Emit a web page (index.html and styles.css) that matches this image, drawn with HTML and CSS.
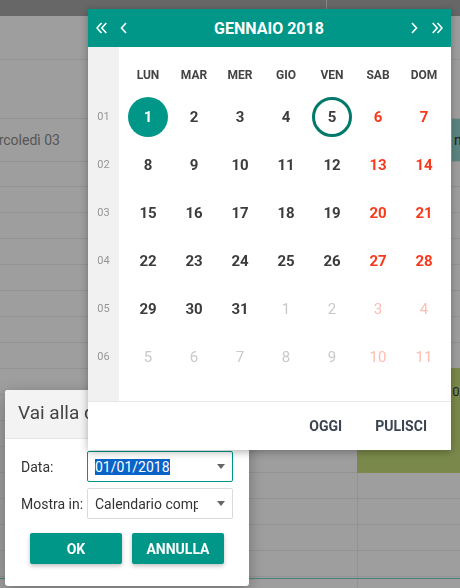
FILE: index.html
```html
<!DOCTYPE html>
<html lang="it">
<head>
    <meta charset="UTF-8">
    <meta name="viewport" content="width=device-width, initial-scale=1.0">
    <title>Vai alla data</title>
    <link rel="stylesheet" href="styles.css">
</head>
<body>

<div class="app">
    <div class="topbar"><div class="topbar-left"></div></div>
    <div class="row row-tall"></div>
    <div class="row row-taller"></div>
    <div class="row day-row">
        <span class="day-label">Mercoledì 03</span>
        <span class="allday">nel</span>
    </div>
    <div class="row row-short"></div>
    <div class="slots">
        <div class="slot"></div><div class="slot"></div><div class="slot"></div><div class="slot"></div>
        <div class="slot"></div><div class="slot"></div><div class="slot"></div><div class="slot"></div>
        <div class="slot"></div><div class="slot"></div><div class="slot"></div><div class="slot"></div>
        <div class="slot"></div><div class="slot"></div><div class="slot"></div><div class="slot"></div>
        <div class="event">10:00 - 12:00</div>
        <div class="now-line"></div>
    </div>
</div>

<div class="backdrop"></div>

<div class="dialog">
    <div class="dialog-title">Vai alla data</div>
    <div class="dialog-body">
        <div class="field">
            <label>Data:</label>
            <div class="select focused">
                <span class="sel-text"><span class="highlight">01/01/2018</span></span>
                <i class="caret"></i>
            </div>
        </div>
        <div class="field">
            <label>Mostra in:</label>
            <div class="select">
                <span class="sel-text">Calendario completo</span>
                <i class="caret"></i>
            </div>
        </div>
        <div class="dialog-actions">
            <button class="btn">OK</button>
            <button class="btn">ANNULLA</button>
        </div>
    </div>
</div>

<div class="datepicker">
    <div class="dp-header">
        <button class="dp-nav" title="Anno precedente">
            <svg width="11" height="12" viewBox="0 0 11 12"><path d="M5.5 1 L1 6 L5.5 11 M10.3 1 L5.8 6 L10.3 11"/></svg>
        </button>
        <button class="dp-nav dp-gap" title="Mese precedente">
            <svg width="7" height="12" viewBox="0 0 7 12"><path d="M6 1 L1.5 6 L6 11"/></svg>
        </button>
        <div class="dp-title">GENNAIO 2018</div>
        <button class="dp-nav dp-gap-r" title="Mese successivo">
            <svg width="7" height="12" viewBox="0 0 7 12"><path d="M1 1 L5.5 6 L1 11"/></svg>
        </button>
        <button class="dp-nav" title="Anno successivo">
            <svg width="11" height="12" viewBox="0 0 11 12"><path d="M0.7 1 L5.2 6 L0.7 11 M5.5 1 L10 6 L5.5 11"/></svg>
        </button>
    </div>

    <div class="dp-body">
        <div class="dp-weeks">
            <span>01</span><span>02</span><span>03</span><span>04</span><span>05</span><span>06</span>
        </div>
        <div class="dp-days">
            <span class="dp-dow">LUN</span><span class="dp-dow">MAR</span><span class="dp-dow">MER</span>
            <span class="dp-dow">GIO</span><span class="dp-dow">VEN</span><span class="dp-dow">SAB</span>
            <span class="dp-dow">DOM</span>

            <span class="dp-day"><b class="selected">1</b></span>
            <span class="dp-day"><b>2</b></span>
            <span class="dp-day"><b>3</b></span>
            <span class="dp-day"><b>4</b></span>
            <span class="dp-day"><b class="today">5</b></span>
            <span class="dp-day weekend"><b>6</b></span>
            <span class="dp-day weekend"><b>7</b></span>

            <span class="dp-day"><b>8</b></span>
            <span class="dp-day"><b>9</b></span>
            <span class="dp-day"><b>10</b></span>
            <span class="dp-day"><b>11</b></span>
            <span class="dp-day"><b>12</b></span>
            <span class="dp-day weekend"><b>13</b></span>
            <span class="dp-day weekend"><b>14</b></span>

            <span class="dp-day"><b>15</b></span>
            <span class="dp-day"><b>16</b></span>
            <span class="dp-day"><b>17</b></span>
            <span class="dp-day"><b>18</b></span>
            <span class="dp-day"><b>19</b></span>
            <span class="dp-day weekend"><b>20</b></span>
            <span class="dp-day weekend"><b>21</b></span>

            <span class="dp-day"><b>22</b></span>
            <span class="dp-day"><b>23</b></span>
            <span class="dp-day"><b>24</b></span>
            <span class="dp-day"><b>25</b></span>
            <span class="dp-day"><b>26</b></span>
            <span class="dp-day weekend"><b>27</b></span>
            <span class="dp-day weekend"><b>28</b></span>

            <span class="dp-day"><b>29</b></span>
            <span class="dp-day"><b>30</b></span>
            <span class="dp-day"><b>31</b></span>
            <span class="dp-day other"><b>1</b></span>
            <span class="dp-day other"><b>2</b></span>
            <span class="dp-day other weekend"><b>3</b></span>
            <span class="dp-day other weekend"><b>4</b></span>

            <span class="dp-day other"><b>5</b></span>
            <span class="dp-day other"><b>6</b></span>
            <span class="dp-day other"><b>7</b></span>
            <span class="dp-day other"><b>8</b></span>
            <span class="dp-day other"><b>9</b></span>
            <span class="dp-day other weekend"><b>10</b></span>
            <span class="dp-day other weekend"><b>11</b></span>
        </div>
    </div>

    <div class="dp-footer">
        <button class="dp-action">OGGI</button>
        <button class="dp-action">PULISCI</button>
    </div>
</div>

</body>
</html>
```

FILE: styles.css
```css
body {
    margin: 0;
    width: 460px;
    height: 588px;
    overflow: hidden;
    font-family: Roboto, 'Liberation Sans', sans-serif;
}

button {
    font: inherit;
    cursor: pointer;
}

/* calendar behind the modal */
.app {
    height: 588px;
    background: #fff;
}

.topbar {
    height: 16px;
    background: #a6a6a6;
}

.topbar-left {
    width: 326px;
    height: 100%;
    border-right: 1px solid #dcdcdc;
}

.row {
    box-sizing: border-box;
    border-bottom: 1px solid #ededed;
}

.row-tall { height: 44px; }
.row-taller { height: 59px; }
.row-short { height: 25px; }

.day-row {
    height: 43px;
    display: flex;
    align-items: center;
    justify-content: space-between;
}

.day-label {
    margin-left: -21px;
    font-size: 14px;
    color: #8c8c8c;
}

.allday {
    align-self: stretch;
    width: 6px;
    padding-left: 2px;
    overflow: hidden;
    line-height: 43px;
    font-size: 14px;
    color: #333;
    background: #93d6cd;
}

.slots {
    position: relative;
}

.slot {
    height: 26px;
    box-sizing: border-box;
    border-bottom: 1px solid #ededed;
    background: linear-gradient(#ededed, #ededed) 357px 0 / 1px 100% no-repeat;
}

.event {
    position: absolute;
    top: 181px;
    left: 357px;
    right: 0;
    height: 105px;
    box-sizing: border-box;
    padding: 16px 0 0 88px;
    overflow: hidden;
    white-space: nowrap;
    font-size: 13px;
    color: #3a3a3a;
    background: #c5de7a;
}

.now-line {
    position: absolute;
    top: 391px;
    left: 0;
    right: 0;
    height: 1px;
    background: #72d2c6;
}

.backdrop {
    position: fixed;
    top: 0;
    left: 0;
    right: 0;
    bottom: 0;
    background: rgba(0, 0, 0, 0.38);
}

/* "Vai alla data" dialog */
.dialog {
    position: fixed;
    left: 5px;
    top: 390px;
    width: 244px;
    height: 196px;
    background: #fff;
    border-radius: 3px;
    overflow: hidden;
    box-shadow: 0 4px 16px rgba(0, 0, 0, 0.3);
}

.dialog-title {
    height: 49px;
    box-sizing: border-box;
    padding: 0 0 4px 13px;
    line-height: 45px;
    font-size: 19px;
    color: #444;
    background: #f3f3f3;
    border-bottom: 1px solid #e6e6e6;
}

.dialog-body {
    padding: 12px 16px 0;
}

.field {
    display: flex;
    align-items: center;
    margin-bottom: 6px;
}

.field label {
    width: 66px;
    font-size: 14px;
    color: #333;
}

.select {
    width: 146px;
    height: 31px;
    box-sizing: border-box;
    display: flex;
    align-items: center;
    padding: 0 7px 0 7px;
    border: 1px solid #dadada;
    border-radius: 2px;
    font-size: 14px;
    color: #333;
}

.select.focused {
    border-color: #009688;
}

.sel-text {
    flex: 1;
    overflow: hidden;
    white-space: nowrap;
}

.highlight {
    color: #fff;
    background: #0a64c8;
}

.caret {
    width: 0;
    height: 0;
    margin-left: 19px;
    border-left: 4.5px solid transparent;
    border-right: 4.5px solid transparent;
    border-top: 5px solid #666;
}

.dialog-actions {
    display: flex;
    gap: 10px;
    padding: 0 9px;
    margin-top: 14px;
}

.btn {
    flex: 1;
    height: 31px;
    border: 0;
    border-radius: 2px;
    font-size: 14px;
    font-weight: bold;
    color: #fff;
    background: #009688;
    box-shadow: 0 2px 4px rgba(0, 0, 0, 0.25);
}

/* date picker popup */
.datepicker {
    position: fixed;
    left: 88px;
    top: 9px;
    width: 363px;
    background: #fff;
    box-shadow: 0 2px 8px rgba(0, 0, 0, 0.3);
}

.dp-header {
    height: 38px;
    display: flex;
    align-items: center;
    padding: 0 8px;
    background: #009688;
}

.dp-nav {
    display: flex;
    padding: 0;
    border: 0;
    background: none;
}

.dp-nav svg {
    fill: none;
    stroke: #fff;
    stroke-width: 1.6;
}

.dp-gap { margin-left: 13px; }
.dp-gap-r { margin-right: 14px; }

.dp-title {
    flex: 1;
    text-align: center;
    font-size: 16px;
    font-weight: bold;
    color: #fff;
}

.dp-body {
    display: flex;
}

.dp-weeks {
    width: 31px;
    padding: 46px 0 20px;
    background: #f1f1f1;
}

.dp-weeks span {
    display: block;
    height: 48px;
    line-height: 48px;
    text-align: center;
    font-size: 11px;
    color: #969696;
}

.dp-days {
    display: grid;
    grid-template-columns: repeat(7, 46px);
    grid-template-rows: 36px repeat(6, 48px);
    padding: 10px 4px 20px 6px;
}

.dp-dow {
    display: flex;
    align-items: center;
    justify-content: center;
    font-size: 12px;
    font-weight: bold;
    color: #444;
}

.dp-day {
    display: flex;
    align-items: center;
    justify-content: center;
}

.dp-day b {
    width: 40px;
    height: 40px;
    box-sizing: border-box;
    border-radius: 50%;
    display: flex;
    align-items: center;
    justify-content: center;
    font-size: 15px;
    color: #3c3c3c;
}

.dp-day.weekend b { color: #f8391c; }
.dp-day.other b { color: #c9c9c9; font-weight: normal; }
.dp-day.other.weekend b { color: #ffbcb1; }

.dp-day b.selected {
    color: #fff;
    background: #009688;
}

.dp-day b.today {
    border: 3px solid #00796b;
}

.dp-footer {
    height: 49px;
    box-sizing: border-box;
    display: flex;
    align-items: center;
    justify-content: flex-end;
    gap: 9px;
    padding-right: 12px;
    border-top: 1px solid #e6e6e6;
}

.dp-action {
    height: 36px;
    padding: 0 12px;
    border: 0;
    background: none;
    font-size: 14px;
    font-weight: bold;
    color: #3b4350;
}
```
